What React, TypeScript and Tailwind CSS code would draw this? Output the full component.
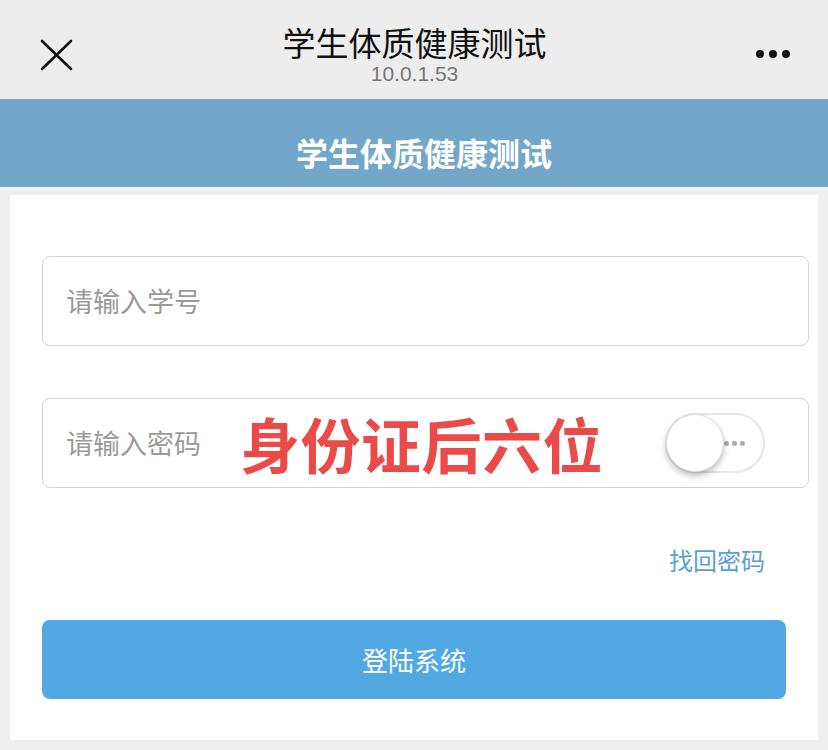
import React from "react";

export default function App() {
  const font = { fontFamily: '"Noto Sans CJK SC", "Noto Sans", sans-serif' };
  const headFont = { fontFamily: '"Liberation Sans", "Noto Sans CJK SC", sans-serif' };
  return (
    <div className="w-[828px] h-[750px] bg-[#efefef] overflow-hidden" style={font}>
      {/* Top nav */}
      <div className="h-[99px] bg-[#ededed] flex items-start justify-between px-[40px]">
        <svg width="33" height="32" viewBox="0 0 33 32" className="mt-[39px]">
          <path d="M2 2 L31 30 M31 2 L2 30" stroke="#111" strokeWidth="2.6" strokeLinecap="round" />
        </svg>
        <div className="flex flex-col items-center pt-[27px]" style={headFont}>
          <div className="text-[33px] leading-[35px] text-[#111]">学生体质健康测试</div>
          <div className="text-[21px] leading-[22px] text-[#777] mt-[1px]">10.0.1.53</div>
        </div>
        <div className="flex gap-[5px] mt-[50px] mr-[-2px]">
          <span className="w-[8px] h-[8px] rounded-full bg-[#111]" />
          <span className="w-[8px] h-[8px] rounded-full bg-[#111]" />
          <span className="w-[8px] h-[8px] rounded-full bg-[#111]" />
        </div>
      </div>
      {/* Blue band */}
      <div className="h-[88px] bg-[#73a7ca] flex items-center justify-center">
        <div className="text-[32px] text-white font-bold mt-[18px] ml-[20px] leading-[40px]">学生体质健康测试</div>
      </div>
      {/* Card */}
      <div className="mx-[10px] mt-[8px] h-[545px] bg-white pt-[61px] pl-[32px] pr-[9px]">
        <div className="h-[90px] border-[1.5px] border-[#d4d4d4] rounded-[8px] flex items-center pl-[23px]">
          <span className="text-[27px] text-[#9a9a9a]">请输入学号</span>
        </div>
        <div className="mt-[52px] h-[90px] border-[1.5px] border-[#d4d4d4] rounded-[8px] flex items-center pl-[23px] pr-[43px]">
          <span className="text-[27px] text-[#9a9a9a]">请输入密码</span>
          <span className="ml-[39px] text-[60px] font-bold text-[#ea4b48] leading-none tracking-[0.5px]">身份证后六位</span>
          <div className="ml-auto relative w-[100px] h-[60px] rounded-full border-[2px] border-[#e6e6e6] bg-white flex items-center justify-end pr-[18px]">
            <div className="flex gap-[3px]">
              <span className="w-[5px] h-[5px] rounded-full bg-[#aaa]" />
              <span className="w-[5px] h-[5px] rounded-full bg-[#aaa]" />
              <span className="w-[5px] h-[5px] rounded-full bg-[#aaa]" />
            </div>
            <div className="absolute left-[-1px] top-[-1px] w-[58px] h-[58px] rounded-full bg-white border border-[#ddd] shadow-[0_4px_6px_rgba(0,0,0,0.25)]" />
          </div>
        </div>
        <div className="flex justify-end mt-[54px] pr-[44px]">
          <span className="text-[24px] text-[#5b9fd2]">找回密码</span>
        </div>
        <div className="mt-[42px] mr-[23px] h-[79px] bg-[#52a8e3] rounded-[8px] flex items-center justify-center">
          <span className="text-[26px] text-white">登陆系统</span>
        </div>
      </div>
    </div>
  );
}
